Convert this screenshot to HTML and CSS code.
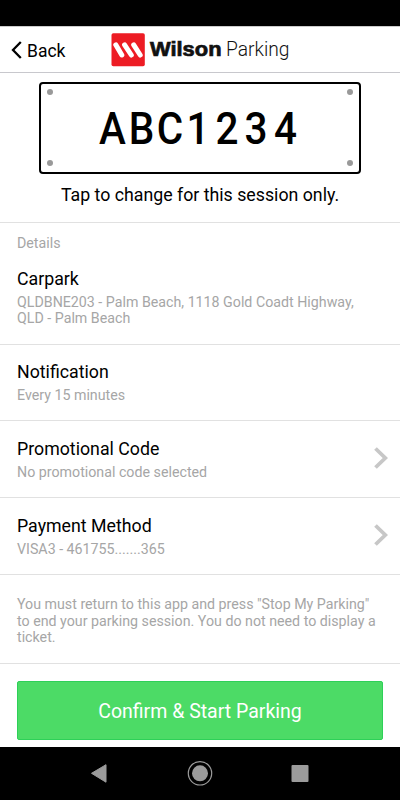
FILE: index.html
```
<!DOCTYPE html>
<html lang="en">
<head>
<meta charset="utf-8">
<title>Wilson Parking</title>
<link rel="stylesheet" href="styles.css">
</head>
<body>
<div class="status"></div>
<header class="header">
  <a class="back"><svg width="11" height="18" viewBox="0 0 11 18"><path d="M9.800 1 2 9l7.800 8" fill="none" stroke="#000" stroke-width="2.300"/></svg><span>Back</span></a>
  <div class="brand">
    <svg width="34" height="34" viewBox="0 0 34 34"><rect x=".5" y=".2" width="33.300" height="33" rx="1.800" fill="#ed1c24"/><path d="M4.800 11.800 10.800 22M13.600 11.800 20.300 22M22.700 11.800 29.200 22" fill="none" stroke="#fff" stroke-width="5" stroke-linecap="round"/></svg>
    <svg class="wordmark" width="142" height="34" viewBox="0 0 142 34"><text class="wilson" x="1" y="22.700" textLength="71.500" lengthAdjust="spacingAndGlyphs">Wilson</text><text class="parking" x="77" y="22.700" textLength="63.500" lengthAdjust="spacingAndGlyphs">Parking</text></svg>
  </div>
</header>
<main>
  <section class="vehicle">
    <div class="plate">
      <i class="bolt tl"></i><i class="bolt tr"></i><i class="bolt bl"></i><i class="bolt br"></i>
      <svg width="230" height="80" viewBox="-10 -15 230 80"><text class="reg" transform="scale(.92 1)" y="40.500" x="19 50.500 81.500 112 143.500 175 207" text-anchor="middle">ABC1234</text></svg>
    </div>
    <p class="tap">Tap to change for this session only.</p>
  </section>
  <section class="row carpark">
    <div class="label">Details</div>
    <h2>Carpark</h2>
    <p>QLDBNE203 - Palm Beach, 1118 Gold Coadt Highway,<br>QLD - Palm Beach</p>
  </section>
  <section class="row notify"><div><h2>Notification</h2><p>Every 15 minutes</p></div></section>
  <section class="row link"><div><h2>Promotional Code</h2><p>No promotional code selected</p></div>
    <svg class="chevron" width="14" height="22" viewBox="0 0 14 22"><path d="M1.500 1.500 11.300 11 1.500 20.500" fill="none" stroke="#c7c7c7" stroke-width="3.800"/></svg></section>
  <section class="row link"><div><h2>Payment Method</h2><p>VISA3 - 461755.......365</p></div>
    <svg class="chevron" width="14" height="22" viewBox="0 0 14 22"><path d="M1.500 1.500 11.300 11 1.500 20.500" fill="none" stroke="#c7c7c7" stroke-width="3.800"/></svg></section>
  <section class="row note"><p>You must return to this app and press "Stop My Parking"<br>to end your parking session. You do not need to display a<br>ticket.</p></section>
  <section class="action"><button>Confirm &amp; Start Parking</button></section>
</main>
<nav class="navbar">
  <svg width="400" height="53" viewBox="0 0 400 53"><g fill="#9b9b9b"><path d="M91.500 26.300 106 17.700v17.500z" stroke="#9b9b9b" stroke-linejoin="round"/><circle cx="200" cy="26.300" r="8"/><rect x="291.500" y="18" width="17" height="17" rx="1"/></g><circle cx="200" cy="26.300" r="11.700" fill="none" stroke="#9b9b9b" stroke-width="1.200"/></svg>
</nav>
</body>
</html>
```
FILE: styles.css
```
* { box-sizing: border-box; }
body { margin: 0; width: 400px; height: 800px; overflow: hidden; background: #fff; color: #000; font-family: Roboto, "Liberation Sans", sans-serif; display: flex; flex-direction: column; }
svg { display: block; flex: none; }
h2, p { margin: 0; font-weight: 400; }
.status { height: 26px; background: #000; }
.header { height: 47px; border-bottom: 1px solid #c8c8cd; border-top: 1px solid #ccc; display: flex; align-items: center; padding-left: 11px; }
.back { display: flex; align-items: center; gap: 5px; width: 100px; font-size: 17.500px; }
.back span { padding-top: 2px; }
.brand { display: flex; align-items: center; gap: 4px; }
.wordmark { overflow: visible; }
.wilson { font: 700 20px "Liberation Sans", sans-serif; fill: #111; stroke: #111; stroke-width: .7px; }
.parking { font: 300 20.500px Roboto, sans-serif; fill: #111; }
main { height: 674px; }
.vehicle { height: 150px; padding-top: 9px; border-bottom: 1px solid #e1e1e1; }
.plate { position: relative; width: 322px; height: 92px; margin: 0 auto; border: 2px solid #000; border-radius: 4px; display: flex; align-items: center; justify-content: center; }
.reg { font: 500 44px Roboto, sans-serif; }
.bolt { position: absolute; width: 6px; height: 6px; border-radius: 50%; background: #999; }
.tl, .tr { top: 5px; } .bl, .br { bottom: 6px; }
.tl, .bl { left: 6px; } .tr, .br { right: 6px; }
.tap { text-align: center; font-size: 17.750px; line-height: 22px; margin-top: 10px; }
.row { height: 77px; padding: 0 12px 0 17px; border-bottom: 1px solid #e1e1e1; display: flex; align-items: center; justify-content: space-between; }
.row h2 { font-size: 17.750px; line-height: 22px; }
.row p, .label { font-size: 14.220px; line-height: 16.500px; color: #a6a6a6; white-space: nowrap; }
.row h2 + p { margin-top: 4px; }
.carpark { height: 122px; display: block; padding-top: 12px; }
.label { margin-bottom: 16px; }
.notify { height: 76px; }
.chevron { margin-bottom: 2px; }
.note { height: 89px; padding-top: 4px; }
.action { padding: 17px 17px 0; }
button { width: 100%; height: 59px; border: 1px solid #2ed058; border-radius: 2px; background: #4cdb66; color: #fff; font: 400 19.500px Roboto, sans-serif; padding: 1px 0 0; display: block; }
.navbar { height: 53px; background: #000; }
```
